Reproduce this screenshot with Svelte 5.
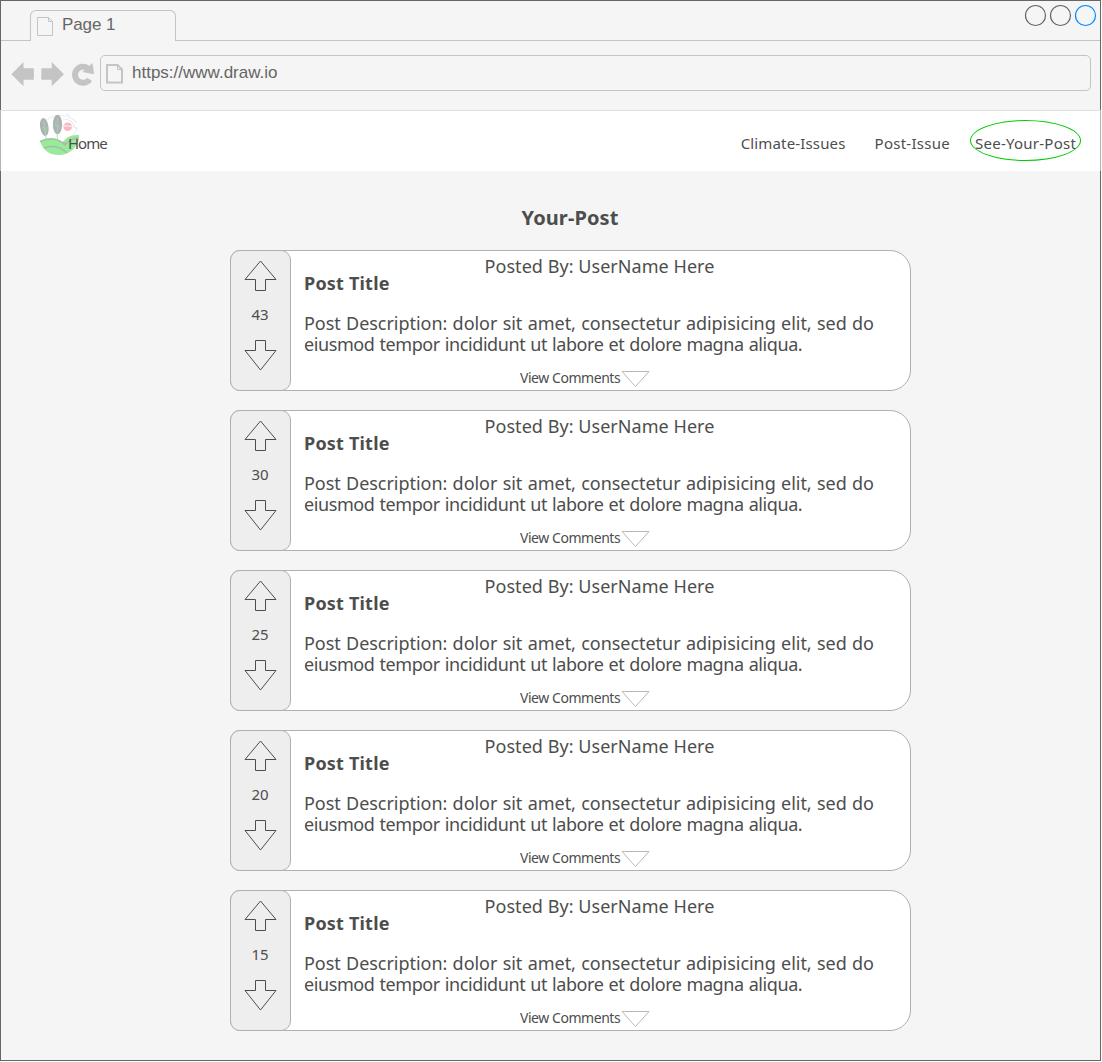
<script>
  const posts = [43, 30, 25, 20, 15].map((votes) => ({
    votes,
    author: 'UserName Here',
    title: 'Post Title',
    lineOne: 'Post Description: dolor sit amet, consectetur adipisicing elit, sed do',
    lineTwo: 'eiusmod tempor incididunt ut labore et dolore magna aliqua.'
  }));
</script>

<div class="window">
  <header class="chrome">
    <div class="tabs">
      <div class="tab">
        <svg class="tab-icon" width="18" height="20" viewBox="0 0 18 20">
          <path d="M1.5 1.5H12.5L16.5 5.5V19.5H1.5Z M12.5 1.5V5.5H16.5" />
        </svg>
        <span>Page 1</span>
      </div>
      <svg class="controls" width="74" height="24" viewBox="0 0 74 24">
        <circle cx="12.5" cy="12.5" r="10" />
        <circle cx="37.5" cy="12.5" r="10" />
        <circle class="active" cx="62.5" cy="12.5" r="10" />
      </svg>
    </div>
    <div class="toolbar">
      <svg class="nav-icons" width="88" height="26" viewBox="0 0 88 26">
        <path d="M0.3 13.3L12.5 1V7.3H22.8V18.8H12.5V25.2Z" />
        <path d="M53 13.3L40.7 1V7.3H30.3V18.8H40.7V25.2Z" />
        <path class="reload" d="M77.5 8A8 8 0 1 0 78.6 18.4" />
        <path d="M81.4 2L83.2 13.2L71.3 11Z" />
      </svg>
      <div class="address">
        <svg class="page-icon" width="20" height="22" viewBox="0 0 20 22">
          <path d="M2 2H12.5L17 6.5V19.5H2Z" />
          <path class="fold" d="M12.5 2V6.5H17" />
        </svg>
        <span>https://www.draw.io</span>
      </div>
    </div>
  </header>

  <nav>
    <a class="brand" href="#home">
      <svg class="logo" width="42" height="44" viewBox="0 0 42 44">
        <path class="swirl" d="M8 7C14 1 30 0 38 10M24 6C31 6 35 10 36 15M27 1L31 3M26 28C32 25 37 20 38 14" />
        <circle class="sun" cx="28.7" cy="13.7" r="4.3" />
        <path class="swirl" d="M13 15C20 12 34 12 39 16" />
        <ellipse class="leaf" cx="5.3" cy="14" rx="4.2" ry="9" transform="rotate(-8 5.3 14)" />
        <ellipse class="leaf" cx="18.5" cy="11.5" rx="4.6" ry="9.8" />
        <path class="stem" d="M4.8 8L7.2 27M18.3 5V27M5.8 17L3.5 13M6 19L8 14M18.2 14L16 10M18.2 17L20.5 12" />
        <path class="hill" d="M1 28C9 24 16 24 24 29C28 23 33 22 40 22V26C38 35 30 42 20 42C11 42 4 38 1 28Z" />
        <path class="furrow" d="M1 28.5C11 24 19 25 26 32C29 28 33 25 40 25M5 35C14 32 22 34 28 40M24 29L27 31" />
      </svg>
      <span>Home</span>
    </a>
    <div class="links">
      <a class="climate" href="#climate">Climate-Issues</a>
      <a class="issue" href="#post">Post-Issue</a>
      <a class="current" href="#yours">See-Your-Post</a>
    </div>
  </nav>

  <main>
    <h1>Your-Post</h1>
    {#each posts as post}
      <article>
        <aside>
          <svg width="33" height="32" viewBox="0 0 33 32">
            <path d="M16.5 1L32 19.5H21.5V30.5H11.5V19.5H1Z" />
          </svg>
          <span>{post.votes}</span>
          <svg width="33" height="32" viewBox="0 0 33 32">
            <path d="M11.5 1.5H21.5V11.5H32L16.5 31L1 11.5H11.5Z" />
          </svg>
        </aside>
        <section>
          <div class="author">Posted By: {post.author}</div>
          <h2>{post.title}</h2>
          <p>
            <span class="line-one">{post.lineOne}</span>
            <span class="line-two">{post.lineTwo}</span>
          </p>
          <div class="comments">
            <span>View Comments</span>
            <svg width="29" height="18" viewBox="0 0 29 18">
              <path d="M1 1.5H28L14.5 16.5Z" />
            </svg>
          </div>
        </section>
      </article>
    {/each}
  </main>
</div>

<style>
  :global(body) {
    margin: 0;
    background: #fff;
  }
  .window {
    box-sizing: border-box;
    width: 1101px;
    height: 1061px;
    border: 1px solid #666;
    background: #f5f5f5;
    color: #4d4d4d;
    font-family: "Comic Sans MS", "Noto Sans", sans-serif;
  }
  svg {
    display: block;
    flex: none;
    fill: none;
  }
  .chrome {
    height: 109px;
    color: #666;
    font: 17px/20px "Liberation Sans", Arial, sans-serif;
  }
  .tabs {
    box-sizing: border-box;
    height: 40px;
    border-bottom: 1px solid #c4c4c4;
    padding: 9px 3px 0 29px;
    display: flex;
    justify-content: space-between;
  }
  .tab {
    box-sizing: border-box;
    width: 146px;
    height: 31px;
    border: 1px solid #c4c4c4;
    border-bottom: 0;
    border-radius: 6px 6px 0 0;
    background: #f5f5f5;
    display: flex;
    padding: 4px 0 0 5px;
  }
  .tab span {
    margin-left: 8px;
    letter-spacing: -0.1px;
  }
  .tab-icon {
    margin-top: 1px;
    stroke: #c4c4c4;
  }
  .controls {
    margin-top: -7px;
    stroke: #666;
    stroke-width: 1.2;
  }
  .active {
    stroke: #008cff;
  }
  .toolbar {
    display: flex;
    padding: 14px 9px 0 10px;
  }
  .nav-icons {
    margin-top: 6px;
    fill: #c4c4c4;
  }
  .reload {
    fill: none;
    stroke: #c4c4c4;
    stroke-width: 6;
  }
  .address {
    box-sizing: border-box;
    flex: 1;
    height: 36px;
    margin-left: 1px;
    border: 1px solid #c4c4c4;
    border-radius: 5px;
    display: flex;
    padding: 7px 0 0 4px;
  }
  .address span {
    margin-left: 7px;
  }
  .page-icon {
    stroke: #c4c4c4;
    stroke-width: 2;
  }
  .fold {
    stroke-width: 1;
  }
  nav {
    position: relative;
    box-sizing: border-box;
    height: 61px;
    margin: 0 -1px;
    border: 1px solid #b3b3b3;
    border-top-color: #dfdfdf;
    border-bottom: 0;
    background: #fff;
    display: flex;
    justify-content: space-between;
    padding: 2px 19px 0 38px;
    font-size: 15px;
    line-height: 21px;
  }
  a {
    color: inherit;
    text-decoration: none;
    white-space: nowrap;
  }
  .brand {
    display: flex;
  }
  .brand span {
    position: relative;
    margin: 20px 0 0 -13px;
    letter-spacing: -1px;
  }
  .swirl {
    stroke: #ececf0;
    stroke-width: 1.2;
  }
  .sun {
    fill: #ffb5c1;
  }
  .leaf {
    fill: #b0b0b9;
  }
  .stem {
    stroke: #99dfa0;
    stroke-width: 0.8;
  }
  .hill {
    fill: #98eb98;
  }
  .furrow {
    stroke: #aab8ae;
    stroke-width: 1.4;
  }
  .links {
    display: flex;
    padding-top: 7px;
  }
  .climate {
    margin: 13px 29px 0 0;
    letter-spacing: 0.15px;
  }
  .issue {
    margin: 13px 20px 0 0;
    letter-spacing: 0.27px;
  }
  .current {
    box-sizing: border-box;
    width: 111px;
    height: 41px;
    border: 1px solid #00cc00;
    border-radius: 50%;
    padding: 12px 0 0 4px;
    letter-spacing: 0.25px;
  }
  main {
    width: 681px;
    margin-left: 229px;
    padding-top: 34px;
  }
  h1 {
    margin: 0 1px 19px 0;
    text-align: center;
    font-size: 20px;
    line-height: 26px;
    letter-spacing: 0.1px;
  }
  article {
    box-sizing: border-box;
    height: 141px;
    margin-bottom: 19px;
    border: 1px solid #b0b0b0;
    border-radius: 10px 21px 21px 10px;
    background: #fff;
    display: flex;
  }
  aside {
    box-sizing: border-box;
    width: 61px;
    height: 141px;
    margin: -1px 0 0 -1px;
    border: 1px solid #b0b0b0;
    border-radius: 10px;
    background: #eee;
    padding-top: 9px;
    display: flex;
    flex-direction: column;
    align-items: center;
    stroke: #4d4d4d;
    font-size: 15px;
    line-height: 20px;
  }
  aside span {
    margin: 12px 1px 15px 0;
    stroke: none;
  }
  section {
    flex: 1;
    font-size: 18px;
    line-height: 21px;
    white-space: nowrap;
  }
  .author {
    padding: 5px 2px 0 0;
    text-align: center;
    letter-spacing: 0.05px;
  }
  h2 {
    margin: -4px 0 19px 13px;
    font-size: 18px;
    letter-spacing: 0.2px;
  }
  p {
    margin: 0 0 15px 13px;
    word-spacing: 0.7px;
  }
  p span {
    display: block;
  }
  .line-one {
    letter-spacing: -0.04px;
  }
  .line-two {
    letter-spacing: -0.41px;
  }
  .comments {
    display: flex;
    margin-left: 229px;
    font-size: 14px;
    line-height: 17px;
    letter-spacing: -0.45px;
  }
  .comments span {
    width: 101px;
    margin-top: -1px;
  }
  .comments svg {
    stroke: #b8b8b8;
  }
</style>
